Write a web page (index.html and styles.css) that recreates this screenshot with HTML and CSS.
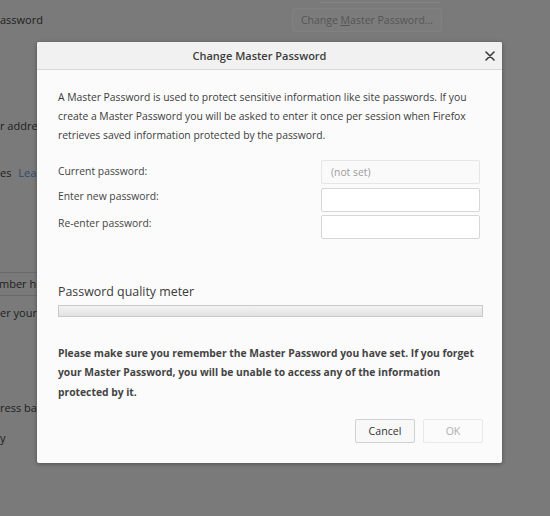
FILE: index.html
```html
<!DOCTYPE html>
<html>
<head>
<meta charset="utf-8">
<link rel="stylesheet" href="styles.css">
</head>
<body>
<div class="page">
  <div class="row r-top"><span class="edge-btn"></span></div>
  <div class="row r-master">
    <span class="bg-text">assword</span>
    <span class="bg-btn">Change <u>M</u>aster Password…</span>
  </div>
  <div class="row r-addr"><span class="bg-text clip">r address</span></div>
  <div class="row r-learn"><span class="bg-text clip">es <span class="bg-link">Learn</span></span></div>
  <div class="row r-hist"><span class="bg-select">mber hi</span></div>
  <div class="row r-your"><span class="bg-text clip">er your b</span></div>
  <div class="row r-bar"><span class="bg-text clip">ress bar</span></div>
  <div class="row r-y"><span class="bg-text clip">y</span></div>
</div>

<div class="dialog">
  <div class="dlg-head">
    <span class="dlg-title">Change Master Password</span>
    <span class="dlg-close"><svg width="10" height="10" viewBox="0 0 10 10"><path d="M1 1L9 9M9 1L1 9" stroke="#3a3a3a" stroke-width="1.6" stroke-linecap="round"/></svg></span>
  </div>
  <div class="dlg-body">
    <p class="intro">A Master Password is used to protect sensitive information like site passwords. If you create a Master Password you will be asked to enter it once per session when Firefox retrieves saved information protected by the password.</p>
    <div class="fields">
      <label class="l1">Current password:</label><div class="input disabled">(not set)</div>
      <label class="l2">Enter new password:</label><div class="input"></div>
      <label class="l2">Re-enter password:</label><div class="input"></div>
    </div>
    <div class="meter-title">Password quality meter</div>
    <div class="meter"></div>
    <p class="warn">Please make sure you remember the Master Password you have set. If you forget your Master Password, you will be unable to access any of the information protected by it.</p>
    <div class="actions">
      <span class="btn">Cancel</span>
      <span class="btn btn-off">OK</span>
    </div>
  </div>
</div>
</body>
</html>
```
FILE: styles.css
```css
html, body {
  margin: 0;
  padding: 0;
}
body {
  width: 550px;
  height: 516px;
  overflow: hidden;
  background: #7a7a7a;
  font-family: "Open Sans", "Noto Sans", sans-serif;
  position: relative;
}
.page {
  display: flex;
  flex-direction: column;
}
.row {
  position: relative;
  font-size: 11px;
  color: #1e1e1e;
  white-space: nowrap;
}
.r-top {
  height: 4px;
}
.edge-btn {
  display: block;
  margin-left: 320px;
  width: 120px;
  height: 2px;
  border-bottom: 1px solid #848484;
}
.r-master {
  height: 26px;
  display: flex;
  align-items: center;
  margin-top: 3px;
}
.bg-text {
  line-height: 16px;
}
.bg-text.clip {
  display: block;
  width: 37px;
  overflow: hidden;
}
.r-master .bg-text {
  width: 292px;
}
.bg-btn {
  width: 150px;
  height: 24px;
  border: 1px solid #818181;
  box-sizing: border-box;
  border-radius: 2px;
  color: #555;
  font-size: 10.5px;
  text-align: center;
  line-height: 22px;
  background: #7c7c7c;
}
.bg-btn u {
  text-decoration: underline;
}
.r-addr {
  margin-top: 85px;
  height: 16px;
}
.r-learn {
  margin-top: 31px;
  height: 16px;
}
.bg-link {
  color: #2a4a6e;
  margin-left: 4px;
}
.r-hist {
  margin-top: 91px;
  height: 24px;
}
.bg-select {
  display: block;
  margin-left: -10px;
  width: 47px;
  height: 24px;
  overflow: hidden;
  border: 1px solid #6a6a6a;
  border-right: none;
  box-sizing: border-box;
  line-height: 22px;
  padding-left: 8px;
}
.r-your {
  margin-top: 9px;
  height: 16px;
}
.r-bar {
  margin-top: 79px;
  height: 16px;
}
.r-y {
  margin-top: 14px;
  height: 16px;
}

.dialog {
  position: absolute;
  left: 37px;
  top: 42px;
  width: 465px;
  height: 421px;
  background: #fbfbfb;
  border-radius: 2px;
  box-shadow: 0 1px 4px rgba(0,0,0,0.35);
  overflow: hidden;
  color: #3a3a3a;
}
.dlg-head {
  height: 27px;
  background: #f1f1f1;
  border-bottom: 1px solid #d8d8d8;
  display: flex;
  align-items: center;
  justify-content: center;
  position: relative;
}
.dlg-title {
  font-size: 11px;
  font-weight: 600;
  color: #3c3c3c;
  margin-left: -20px;
}
.dlg-close {
  position: absolute;
  right: 7px;
  top: 9px;
  width: 10px;
  height: 10px;
  display: flex;
}
.dlg-body {
  padding: 18px 19px 0 21px;
}
p {
  margin: 0;
}
.intro {
  font-size: 10.35px;
  line-height: 19px;
  color: #3c3c3c;
}
.fields {
  margin-top: 15px;
  display: grid;
  grid-template-columns: 263px 159px;
  row-gap: 3.5px;
  align-items: start;
}
.fields label {
  font-size: 10.35px;
  line-height: 16px;
  color: #444;
}
.fields .l1 {
  padding-top: 3px;
}
.fields .l2 {
  padding-top: 0;
}
.input {
  height: 24px;
  box-sizing: border-box;
  border: 1px solid #d6d6d6;
  background: #fff;
  border-radius: 2px;
  font-size: 10.35px;
  line-height: 22px;
  padding-left: 9px;
  color: #9a9a9a;
}
.input.disabled {
  background: #fafafa;
  border-color: #e6e6e6;
}
.meter-title {
  margin-top: 44px;
  font-size: 12.4px;
  line-height: 17px;
  color: #3a3a3a;
}
.meter {
  margin-top: 5px;
  height: 12px;
  box-sizing: border-box;
  border: 1px solid #c9c9c9;
  background: linear-gradient(#f2f2f2, #e2e2e2);
}
.warn {
  margin-top: 27px;
  font-size: 10.3px;
  line-height: 19.3px;
  font-weight: 700;
  color: #444;
}
.actions {
  margin-top: 17px;
  display: flex;
  justify-content: flex-end;
  gap: 8px;
}
.btn {
  width: 60px;
  height: 24px;
  box-sizing: border-box;
  border: 1px solid #d0d0d0;
  border-radius: 2px;
  background: #f8f8f8;
  font-size: 10.6px;
  line-height: 22px;
  text-align: center;
  color: #333;
}
.btn-off {
  border-color: #e8e8e8;
  background: #fbfbfb;
  color: #b0b0b0;
}
```
